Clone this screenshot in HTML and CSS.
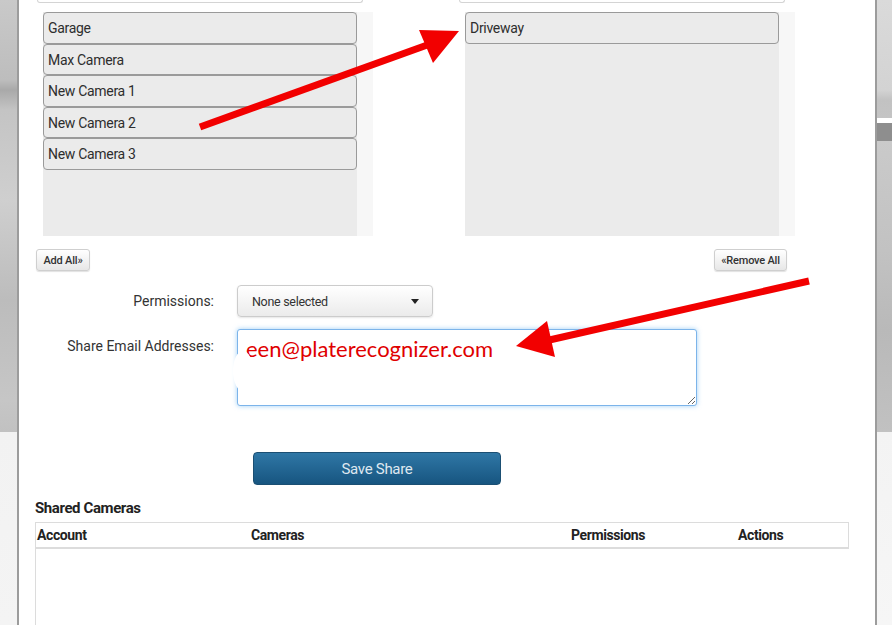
FILE: index.html
```html
<!DOCTYPE html>
<html>
<head>
<meta charset="utf-8">
<link rel="stylesheet" href="styles.css">
</head>
<body>
<div class="page">
  <div class="strip strip-left"></div>
  <div class="modal">
    <div class="dual">
      <div class="dual-col">
        <div class="filter"></div>
        <div class="listbox">
          <div class="list">
            <div class="item">Garage</div>
            <div class="item">Max Camera</div>
            <div class="item">New Camera 1</div>
            <div class="item">New Camera 2</div>
            <div class="item">New Camera 3</div>
          </div>
          <div class="scroll"></div>
        </div>
      </div>
      <div class="dual-col">
        <div class="filter"></div>
        <div class="listbox">
          <div class="list">
            <div class="item">Driveway</div>
          </div>
          <div class="scroll"></div>
        </div>
      </div>
    </div>
    <div class="move-row">
      <button class="small-btn">Add All&raquo;</button>
      <button class="small-btn">&laquo;Remove All</button>
    </div>
    <div class="form-row perm-row">
      <label class="label">Permissions:</label>
      <div class="select"><span>None selected</span><span class="caret"></span></div>
    </div>
    <div class="form-row email-row">
      <label class="label">Share Email Addresses:</label>
      <textarea class="emails">een@platerecognizer.com</textarea>
    </div>
    <button class="save-btn">Save Share</button>
    <h3 class="section-title">Shared Cameras</h3>
    <div class="table">
      <div class="thead">
        <div class="th c1">Account</div>
        <div class="th c2">Cameras</div>
        <div class="th c3">Permissions</div>
        <div class="th c4">Actions</div>
      </div>
      <div class="tbody"></div>
    </div>
  </div>
  <div class="strip strip-right"></div>
</div>
<svg class="annot" width="892" height="625" viewBox="0 0 892 625">
  <line x1="200" y1="127" x2="430" y2="44" stroke="#f20000" stroke-width="7"/>
  <polygon points="459,31 419,30 433,63" fill="#f20000"/>
  <line x1="809" y1="281" x2="545" y2="341" stroke="#f20000" stroke-width="7"/>
  <polygon points="516,346 547,321 555,357" fill="#f20000"/>
  <ellipse cx="243" cy="371" rx="10" ry="20" fill="#ffffff"/>
</svg>
</body>
</html>
```
FILE: styles.css
```css
html, body {
  margin: 0;
  padding: 0;
}
body {
  width: 892px;
  height: 625px;
  overflow: hidden;
  position: relative;
  background: #f3f3f3;
  font-family: Roboto, "Liberation Sans", sans-serif;
  color: #333;
}
.page {
  display: flex;
  height: 625px;
}
.strip {
  flex: none;
}
.strip-left {
  width: 17px;
  background:
    linear-gradient(to bottom, #c9c9c9 0, #bdbdbd 80px, #a9a9a9 90px, #c4c4c4 110px, #cfcfcf 200px, #bcbcbc 300px, #c6c6c6 400px, #c1c1c1 432px, #f2f2f2 432px, #f4f4f4 100%);
}
.strip-right {
  width: 15px;
  background:
    linear-gradient(to bottom, #dadada 0, #d3d3d3 90px, #c2c2c2 100px, #c4c4c4 118px, #ffffff 118px, #ffffff 123px, #8e8e8e 123px, #8e8e8e 141px, #cacaca 141px, #c2c2c2 250px, #b9b9b9 330px, #c1c1c1 432px, #f3f3f3 432px, #f6f6f6 100%);
}
.modal {
  flex: 1;
  background: #fff;
  border-left: 2px solid #9c9c9c;
  border-right: 2px solid #9c9c9c;
  padding-left: 17px;
  box-sizing: border-box;
  overflow: hidden;
}
.dual {
  display: grid;
  grid-template-columns: 422px 422px;
}
.filter {
  margin-left: 1px;
  width: 326px;
  height: 3px;
  box-sizing: border-box;
  border: 1px solid #d4d4d4;
  border-top: none;
  border-radius: 0 0 4px 4px;
  background: #fff;
}
.listbox {
  margin-top: 9px;
  margin-left: 7px;
  display: flex;
  height: 224px;
}
.list {
  width: 314px;
  background: #ebebeb;
}
.scroll {
  width: 16px;
  background: #f7f7f7;
}
.item {
  box-sizing: border-box;
  height: 31.5px;
  border: 1px solid #9a9a9a;
  border-radius: 4px;
  background: #ebebeb;
  padding-left: 4px;
  font-size: 14px;
  letter-spacing: -0.3px;
  line-height: 30px;
  color: #2e2e2e;
}
.move-row {
  margin-top: 13px;
  width: 751px;
  display: flex;
  justify-content: space-between;
}
.small-btn {
  height: 22px;
  box-sizing: border-box;
  padding: 0 6px;
  font-family: Roboto, "Liberation Sans", sans-serif;
  font-size: 11px;
  font-weight: 500;
  letter-spacing: -0.2px;
  color: #333;
  border: 1px solid #cfcfcf;
  border-radius: 3px;
  background: linear-gradient(to bottom, #ffffff, #e7e7e7);
  box-shadow: 0 1px 1px rgba(0,0,0,0.12);
}
.small-btn:first-child {
  width: 54px;
}
.small-btn:last-child {
  width: 73px;
}
.form-row {
  display: flex;
  gap: 23px;
}
.label {
  width: 178px;
  flex: none;
  text-align: right;
  font-size: 14px;
  letter-spacing: 0;
  color: #333;
}
.perm-row {
  margin-top: 14px;
  align-items: center;
}
.select {
  width: 196px;
  height: 32px;
  box-sizing: border-box;
  display: flex;
  align-items: center;
  justify-content: space-between;
  padding: 0 13px 0 14px;
  border: 1px solid #cccccc;
  border-radius: 4px;
  background: linear-gradient(to bottom, #ffffff, #ebebeb);
  box-shadow: 0 1px 2px rgba(0,0,0,0.1);
  font-size: 12.5px;
  letter-spacing: -0.3px;
  color: #333;
}
.caret {
  width: 0;
  height: 0;
  border-left: 4px solid transparent;
  border-right: 4px solid transparent;
  border-top: 5px solid #222;
}
.email-row {
  margin-top: 12px;
}
.email-row .label {
  padding-top: 9px;
}
.emails {
  width: 460px;
  height: 77px;
  box-sizing: border-box;
  margin: 0;
  padding: 5px 8px;
  border: 1px solid #7cb4ea;
  border-radius: 3px;
  box-shadow: 0 0 5px rgba(82,168,236,0.55);
  font-family: Lato, "Open Sans", sans-serif;
  font-size: 22px;
  line-height: 28px;
  color: #e00000;
  outline: none;
  resize: both;
}
.save-btn {
  display: block;
  margin: 46px 0 0 217px;
  width: 248px;
  height: 33px;
  border: 1px solid #1b4f73;
  border-radius: 4px;
  background: linear-gradient(to bottom, #2f77a6, #175580);
  color: #dfe8f0;
  font-family: Roboto, "Liberation Sans", sans-serif;
  font-size: 15px;
  letter-spacing: -0.3px;
}
.section-title {
  margin: 14px 0 4px 0;
  height: 19px;
  font-size: 15px;
  line-height: 19px;
  font-weight: 700;
  letter-spacing: -0.4px;
  color: #222;
  margin-left: -1px;
}
.table {
  margin-left: -1px;
  width: 814px;
}
.thead {
  display: flex;
  height: 27px;
  box-sizing: border-box;
  border: 1px solid #dcdcdc;
  border-bottom-width: 2px;
  align-items: center;
}
.th {
  font-size: 14px;
  font-weight: 700;
  letter-spacing: -0.4px;
  color: #222;
  padding-left: 1px;
  box-sizing: border-box;
}
.c1 { width: 214px; }
.c2 { width: 320px; }
.c3 { width: 167px; }
.c4 { width: 111px; }
.tbody {
  height: 100px;
  border-left: 1px solid #dcdcdc;
}
.annot {
  position: absolute;
  left: 0;
  top: 0;
  pointer-events: none;
}
```
